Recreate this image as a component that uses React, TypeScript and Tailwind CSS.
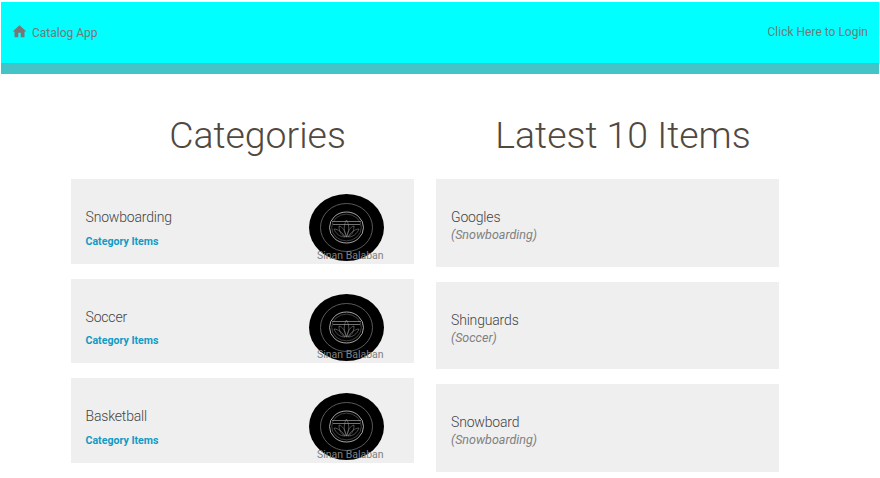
const categories = ["Snowboarding", "Soccer", "Basketball"];
const items = [
  { name: "Googles", category: "Snowboarding" },
  { name: "Shinguards", category: "Soccer" },
  { name: "Snowboard", category: "Snowboarding" },
];

const Logo = () => (
  <svg viewBox="0 0 75 67" className="h-[67px] w-[75px]">
    <ellipse cx="37.5" cy="33.5" rx="37.5" ry="33.5" fill="#000" />
    <ellipse cx="37.5" cy="33.5" rx="26" ry="24" fill="none" stroke="#707070" strokeWidth="0.8" />
    <ellipse cx="37.5" cy="33.5" rx="17" ry="15.5" fill="none" stroke="#b8b8b8" strokeWidth="0.9" />
    <ellipse cx="37.5" cy="33.5" rx="14.8" ry="13.4" fill="none" stroke="#666" strokeWidth="0.6" />
    <path d="M23 27.5h29M24 30.5h27" stroke="#a0a0a0" strokeWidth="0.7" fill="none" />
    <path d="M37.5 26c3 5 3 11 0 17c-3-6-3-12 0-17zM30 32c4 1 6 5 7.5 11c-5-1-7.5-5-7.5-11zM45 32c-4 1-6 5-7.5 11c5-1 7.5-5 7.5-11zM25 35c4 0 9 4 11 8c-5 0-9-3-11-8zM50 35c-4 0-9 4-11 8c5 0 9-3 11-8z" stroke="#909090" strokeWidth="0.55" fill="none" />
  </svg>
);

export default function App() {
  return (
    <div className="h-[478px] overflow-hidden bg-white pl-px pr-px pt-[2px] font-['Roboto',sans-serif]">
      <nav className="flex h-[72px] items-center justify-between border-b-[11px] border-[#45c4c8] bg-[#00ffff] pl-[11px] pr-[11px] text-[12px] text-[#777777]">
        <a className="flex items-center">
          <svg viewBox="0 0 24 24" className="mr-[5px] h-[15px] w-[15px] -translate-y-px fill-[#777777]">
            <path d="M10 21v-7h4v7h6v-9h3L12 2 1 12h3v9z" />
          </svg>
          Catalog App
        </a>
        <a className="-translate-y-px">Click Here to Login</a>
      </nav>

      <main className="flex pl-[70px] pt-[40px]">
        <section className="mr-[22px] w-[343px]">
          <h1 className="mb-[23px] pl-[30px] text-center text-[37.4px] font-light leading-[42px] text-[#514840]">
            Categories
          </h1>
          {categories.map((name) => (
            <div key={name} className="relative mb-[15px] flex h-[84.5px] bg-[#efefef] pl-[14.5px]">
              <div className="pt-[29px]">
                <div className="text-[14px] font-light leading-[18px] tracking-[-0.17px] text-[#444444]">{name}</div>
                <a className="mt-[8.75px] block text-[10.6px] font-bold leading-[14px] text-[#0f9bc4]">Category Items</a>
              </div>
              <div className="absolute left-[238px] top-[15px]">
                <Logo />
              </div>
              <span className="absolute left-[246px] top-[69.75px] text-[10.5px] leading-[14px] text-[#808080]">
                Sinan Balaban
              </span>
            </div>
          ))}
        </section>

        <section className="w-[343px]">
          <h1 className="mb-[23px] pl-[31px] text-center text-[37.4px] font-light leading-[42px] text-[#514840]">
            Latest 10 Items
          </h1>
          {items.map((item) => (
            <div key={item.name} className="mb-[15px] h-[87.5px] bg-[#efefef] pl-[15px] pt-[29px]">
              <div className="text-[14px] font-light leading-[18px] tracking-[-0.17px] text-[#444444]">{item.name}</div>
              <div className="mt-px text-[12.5px] italic leading-[16px] text-[#808080]">({item.category})</div>
            </div>
          ))}
        </section>
      </main>
    </div>
  );
}
